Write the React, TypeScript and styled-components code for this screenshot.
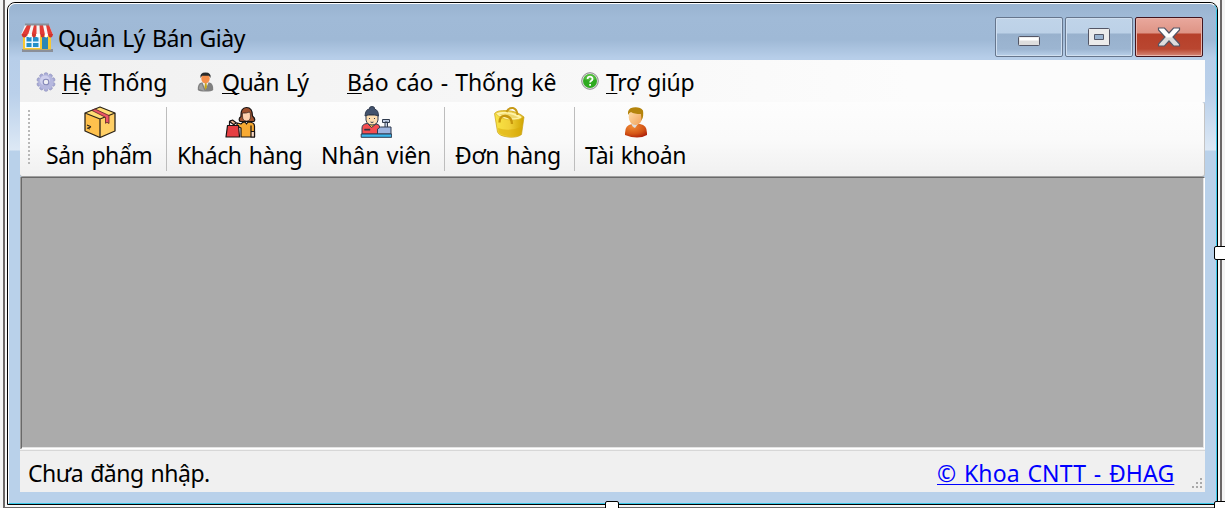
import React from "react";
import styled, { createGlobalStyle } from "styled-components";

const Global = createGlobalStyle`
  * { box-sizing: border-box; }
  body { margin: 0; background: #f5f5f5; overflow: hidden; }
`;

const Designer = styled.div`
  position: relative;
  width: 1225px;
  height: 508px;
  overflow: hidden;
  padding: 0 3px;
  background: #f4f4f4;
  font-family: "Noto Sans", "Open Sans", sans-serif;
  font-size: 23px;
  color: #000;
`;

const Frame = styled.div`
  width: 1219px;
  height: 508px;
  padding: 2px;
  border: solid #6b6767;
  border-width: 0 2px 1px 2px;
  background: #f7f7f7;
`;

const Win = styled.div`
  width: 1211px;
  height: 503px;
  border: 1px solid #000;
  border-radius: 8px 8px 0 0;
  overflow: hidden;
  display: flex;
`;

const Glass = styled.div`
  flex: 1;
  border: 1px solid;
  border-color: #fff #38c8e8 #38c8e8 #fff;
  border-radius: 7px 7px 0 0;
  padding: 0 11px 11px;
  display: flex;
  flex-direction: column;
  background: linear-gradient(
    #99b4d1 0, #a0bad7 14px, #9fb9d6 36px, #b7cee9 54px, #bad0ea 90px,
    #dce8f5 145px, #dce8f5 146px, #b9d1ea 147px, #b9d1ea 100%);
`;

const TitleBar = styled.header`
  height: 56px;
  display: flex;
  align-items: flex-start;
  padding: 13px 2px 0 1px;
`;

const Title = styled.div`
  flex: 1;
  display: flex;
  padding-top: 6px;
  gap: 5px;
`;

const Controls = styled.div`
  display: flex;
  gap: 2px;
`;

const Control = styled.button<{ $close?: boolean }>`
  width: 68px;
  height: 40px;
  padding: 0;
  display: flex;
  align-items: center;
  justify-content: center;
  border: 1px solid ${p => (p.$close ? "#43141d" : "#66768d")};
  border-radius: 2px;
  box-shadow: inset 0 0 0 1px ${p => (p.$close ? "#e8b5ac" : "#d0dff0")};
  background: ${p =>
    p.$close
      ? "linear-gradient(#e9a89d 0, #de9485 15px, #b6402a 16px, #b94630 31px, #d58879 100%)"
      : "linear-gradient(#c0d4e9 0, #bcd1e7 15px, #98b1cd 16px, #9cb5d1 31px, #b9d0ea 100%)"};
`;

const Label = styled.span<{ $w: number; $ls: number }>`
  display: block;
  width: ${p => p.$w}px;
  flex: none;
  line-height: 30px;
  white-space: nowrap;
  letter-spacing: ${p => p.$ls}px;
  word-spacing: 1.5px;
`;

const Key = styled.span`
  text-decoration: underline;
  text-decoration-thickness: 1px;
  text-underline-offset: 2px;
  text-decoration-skip-ink: none;
`;

const MenuBar = styled.nav`
  height: 42px;
  display: flex;
  padding: 7px 0 0 16px;
  background: linear-gradient(90deg, #f0f0f0, #fcfcfc 75%);
`;

const MenuItem = styled.div<{ $ml?: number; $gap?: number }>`
  display: flex;
  gap: ${p => p.$gap ?? 6}px;
  margin-left: ${p => p.$ml ?? 0}px;
  svg { margin-top: 5px; }
`;

const ToolStrip = styled.div`
  height: 75px;
  display: flex;
  padding: 4px 0 0 8px;
  border-bottom: 1px solid #a0a0a0;
  border-right: 1px solid #c4c4c4;
  border-radius: 0 3px 3px 3px;
  background: linear-gradient(#fdfdfd, #fafafa 50%, #f0f0f0);
`;

const Grip = styled.div`
  width: 2px;
  height: 55px;
  margin: 4px 0 0;
  background: repeating-linear-gradient(#b8b8b8 0 2px, transparent 2px 4px);
`;

const Tool = styled.div<{ $ml: number }>`
  display: flex;
  flex-direction: column;
  align-items: center;
  margin-left: ${p => p.$ml}px;
  svg { display: block; margin-bottom: 2px; }
`;

const Divider = styled.div<{ $ml: number }>`
  width: 1px;
  height: 64px;
  margin: 1px 0 0 ${p => p.$ml}px;
  background: #bdbdbd;
`;

const Workspace = styled.main`
  height: 272px;
  margin-left: 1px;
  background: #ababab;
  border: 1px solid;
  border-color: #696969 #fff #fff #696969;
  box-shadow: inset -1px -1px #e3e3e3, -1px 0 #a0a0a0;
`;

const StatusBar = styled.footer`
  height: 43px;
  padding: 9px 1px 0 8px;
  display: flex;
  justify-content: space-between;
  background: linear-gradient(#f4f4f4 0 1px, #d7d7d7 1px 2px, #f0f0f0 2px);
`;

const Right = styled.div`
  display: flex;
  gap: 18px;
  svg { margin-top: 20px; }
`;

const Link = styled(Label)`
  color: #0000ff;
  text-decoration: underline;
  text-decoration-thickness: 1px;
  text-underline-offset: 2px;
`;

const Handle = styled.i<{ $x: number; $y: number }>`
  position: absolute;
  left: ${p => p.$x}px;
  top: ${p => p.$y}px;
  width: 14px;
  height: 14px;
  background: #fff;
  border: 1px solid #000;
  border-radius: 2px;
`;

const ShopIcon = () => (
  <svg width="32" height="30" viewBox="0 0 32 30">
    <rect x="1" y="26" width="31" height="3" fill="#8b8f98" />
    <rect x="2" y="10" width="28" height="16.500" fill="#f8c832" />
    <rect x="4" y="13" width="15" height="12" fill="#e8f6ff" />
    <path d="M5.500 14h5v4.500h-5zM12 14h5.500v4.500H12zM5.500 20h5v4h-5zM12 20h5.500v4H12z" fill="#238fc9" />
    <rect x="21" y="14" width="6" height="12" fill="#2c86b5" />
    <path d="M4 2h24l4 10H0z" fill="#f5f5f5" />
    <path d="M6 2h4L7 12H.5zM13 2h2.500v10H10.500zM18.500 2H22l2 10h-5zM25 2h3l4 10h-5z" fill="#e23c35" />
    <path d="M6.500 11H11q0 3.500-2.300 3.500T6.500 11M15 11h4.500q0 3.500-2.200 3.500T15 11M23.500 11H27q0 3.500-1.800 3.500T23.500 11" fill="#fff" />
    <path d="M.5 11h6q-1 3.500-3.200 3.500T.5 11M11 11h4q0 3.500-2 3.500T11 11M19.500 11h4q0 3.500-2 3.500t-2-3.500M27 11h5q-.5 3.500-2.500 3.500T27 11" fill="#cf342e" />
    <path d="M4 1.500h24" stroke="#8a909a" strokeWidth="2" />
  </svg>
);

const GearIcon = () => (
  <svg width="20" height="20" viewBox="0 0 20 20">
    <g fill="#a9abd6" stroke="#8588b8" strokeWidth=".5">
      {[0, 36, 72, 108, 144].map(a => (
        <rect key={a} x="8.300" y=".8" width="3.400" height="18.400" rx="1" transform={`rotate(${a} 10 10)`} />
      ))}
    </g>
    <circle cx="10" cy="10" r="7.500" fill="#b5b7de" />
    <circle cx="9" cy="8.500" r="5" fill="#cfd0ed" />
    <circle cx="10" cy="10" r="2.800" fill="#f0f0f5" stroke="#8588b8" strokeWidth="1.100" />
  </svg>
);

const ManagerIcon = () => (
  <svg width="17" height="20" viewBox="0 0 17 20">
    <path d="M.8 18q-.5-6.500 3.700-7.500h8q4.200 1 3.700 7.500-1.500 1.500-7.700 1.500T.8 18" fill="#808080" />
    <path d="M2 17q0-4 2.500-5.500l3 7.500z" fill="#a0a0a0" />
    <path d="M5.500 10.500h6l-3 7z" fill="#eee" />
    <path d="M8 11h1.500l.5 4-1.500 3-1-3z" fill="#c4a519" />
    <ellipse cx="8.500" cy="6.500" rx="4.200" ry="5" fill="#f58f4b" />
    <path d="M3.500 6Q2.500.5 8.500.5T13.500 6L12 3.800H5z" fill="#292b2c" />
  </svg>
);

const HelpIcon = () => (
  <svg width="18" height="18" viewBox="0 0 18 18">
    <circle cx="9" cy="9" r="8.300" fill="#e3e3e3" stroke="#8a8a8a" />
    <circle cx="9" cy="9" r="7" fill="#2eaa20" />
    <path d="M3 7q1-5 6-5t6 5q-6 3-12 0" fill="#6acb50" opacity=".55" />
    <path d="M6.600 7q0-2.300 2.500-2.300T11.500 7q0 1-1.200 1.700T9.100 10.500M9.100 12v1.800" fill="none" stroke="#fff" strokeWidth="1.800" />
  </svg>
);

const BoxIcon = () => (
  <svg width="32" height="32" viewBox="0 0 32 32" strokeLinejoin="round">
    <path d="M16 1 31 7v18l-15 6.500L1 25V7z" fill="#ffc14d" />
    <path d="M16 1 31 7l-15 6L1 7z" fill="#ffdc73" />
    <path d="M16 13 31 7v18l-15 6.500z" fill="#ffcf66" />
    <path d="M16 1 31 7v18l-15 6.500L1 25V7zM1 7l15 6 15-6M16 13v18" fill="none" stroke="#2c251b" strokeWidth="1.300" />
    <path d="m8 4.500 3-1.500 14 6.500v8l-2-1.200-1.500 1v-6z" fill="#ed5565" stroke="#542127" strokeWidth=".8" />
    <path d="m3 19 4 1.800M3 22l3 1M7 21l-3 1" fill="none" stroke="#2c251b" strokeWidth="1.100" />
  </svg>
);

const CustomerIcon = () => (
  <svg width="32" height="32" viewBox="-1.500 0 32 32" strokeLinejoin="round" stroke="#171313" strokeWidth="1.200">
    <path d="M14.500 15.500q-2-3 1-5Q15 1.500 21 1.500T27 10q3.500 3 1.500 5.500z" fill="#a0522f" />
    <path d="M17 7q4 .5 7-1 1 1 1 4 0 5-4 5t-4-5z" fill="#ffd2b0" strokeWidth=".6" />
    <path d="M15.500 18q1-2 4-2l1.500 2 1.500-2q6.500 0 6.500 4v11H15.500v-9L11 20l1-3z" fill="#f8aa32" />
    <path d="M25.500 19.500v6M25.500 25.500H29V31h-3.500z" fill="#fbd8c0" />
    <path d="M4 20v-4.500q4-3 5 4.500" fill="none" />
    <path d="M2 19.500h11L14 31H.5z" fill="#e63f43" />
    <path d="m4 15.500 3-1.500 4 3-3 1.500z" fill="#f0b590" />
  </svg>
);

const CashierIcon = () => (
  <svg width="32" height="32" viewBox="-.5 0 32 32" strokeLinejoin="round" stroke="#303b4e" strokeWidth="1">
    <path d="M1.500 28v-6q0-4 5-4.500h8q4.500.5 5 4V28z" fill="#f54d50" />
    <path d="m7 17.500 4 4 5-4-1-1H8z" fill="#ffc83d" />
    <path d="M5.500 9h12v5q-1 5-6 5t-6-5z" fill="#ffdeb0" />
    <path d="M4.500 10Q5 3 9 3q-.5-2.500 2.500-2.500T14 3q4 1 4 7L14 8.500H8z" fill="#43536e" />
    <path d="M9 12v1m5-1v1m-4 3q1.500 1 3 0" fill="none" />
    <path d="M4 23h5.500v1.300H4z" fill="#30343d" strokeWidth=".5" />
    <path d="M24.500 16h2.500v6h-2.500zM22 13.500h7v3h-7z" fill="#c2cfe5" />
    <path d="m17 23 3-2h10.500v7H17z" fill="#9db4df" />
    <path d="M.7 28h30.500v3.300H.7z" fill="#39b7ed" />
  </svg>
);

const BasketIcon = () => (
  <svg width="32" height="32" viewBox="0 0 32 32">
    <defs>
      <linearGradient id="basket"><stop stopColor="#f9e545" /><stop offset=".5" stopColor="#f2d23a" /><stop offset="1" stopColor="#d0a400" /></linearGradient>
    </defs>
    <path d="M1.500 7.500Q4 4 14 4.500T31 11l-2.500 17.500Q24 32 15 31T4.500 26z" fill="url(#basket)" stroke="#c9a11a" strokeWidth=".7" />
    <path d="M2.500 7.500Q5 5 14 5.500T29.500 11q-3 3.500-12 3t-15-6.500" fill="#fff3a6" stroke="#e0bd30" strokeWidth=".8" />
    <path d="M6 8.500q9-3 20 3-8 2.500-20-3" fill="#eed86e" />
    <path d="M5 22q10 4 23.500-1L27.500 28q-5 3-12.500 2T5.500 26z" fill="#d9aa09" opacity=".55" />
    <path d="M13.500 6q2-4.500 6.500-4 4 1 4.500 7" fill="none" stroke="#c79a17" strokeWidth="2" />
    <path d="M6.500 16.500q0-7 6-6.500 6 .5 6.500 8" fill="none" stroke="#c7960c" strokeWidth="2.300" />
  </svg>
);

const UserIcon = () => (
  <svg width="24" height="32" viewBox="0 0 24 32">
    <defs>
      <radialGradient id="shirt" cx=".35" cy=".2" r=".9"><stop stopColor="#f08a35" /><stop offset=".6" stopColor="#d45516" /><stop offset="1" stopColor="#a91a09" /></radialGradient>
      <linearGradient id="face" x2="1" y2="1"><stop stopColor="#ffe0ad" /><stop offset="1" stopColor="#f1a057" /></linearGradient>
    </defs>
    <path d="M1 27q0-8 7-9h8q7 1 7 9v2q-9 5-22 0z" fill="url(#shirt)" />
    <path d="m7 17 7 1-3 4q-3-1-4-5" fill="#ddd" />
    <ellipse cx="11.500" cy="11" rx="6.800" ry="8" fill="url(#face)" />
    <path d="M4 9Q3 2.500 9 1.500q7-1 10 3 1 6-1.500 10L17 8q-7 0-10-2Q5 7 4 9" fill="#b4840c" />
  </svg>
);

const MinIcon = () => (
  <svg width="22" height="40" viewBox="0 0 22 40">
    <rect x=".5" y="19.500" width="21" height="9" rx="1" fill="#ddd" stroke="#535666" />
    <path d="M1.500 20.500h19v3h-19z" fill="#fff" />
  </svg>
);

const MaxIcon = () => (
  <svg width="22" height="18" viewBox="0 0 22 18">
    <path d="M1.500.5h19q1 0 1 1v15q0 1-1 1h-19q-1 0-1-1v-15q0-1 1-1M6.500 6.500v5h9v-5z" fill="#ebebeb" fillRule="evenodd" stroke="#535666" />
  </svg>
);

const CloseIcon = () => (
  <svg width="24" height="20" viewBox="0 0 24 20">
    <defs><linearGradient id="cross" x2="0" y2="1"><stop offset=".5" stopColor="#fff" /><stop offset=".55" stopColor="#ddd" /></linearGradient></defs>
    <path d="M1.500 1h6L12 6l4.500-5h6v2L16 10l6.500 7v2h-6L12 14l-4.500 5h-6v-2L8 10 1.500 3z" fill="url(#cross)" stroke="#535666" strokeWidth="1.200" />
  </svg>
);

const ResizeGrip = () => (
  <svg width="12" height="12" viewBox="0 0 12 12" fill="#a9a9a9">
    <path d="M8 0h2v2H8zM4 4h2v2H4zM8 4h2v2H8zM0 8h2v2H0zM4 8h2v2H4zM8 8h2v2H8z" />
  </svg>
);

export default function App() {
  return (
    <Designer>
      <Global />
      <Frame>
        <Win>
          <Glass>
            <TitleBar>
              <Title><ShopIcon /><Label $w={190} $ls={-0.5}>Quản Lý Bán Giày</Label></Title>
              <Controls>
                <Control aria-label="Minimize"><MinIcon /></Control>
                <Control aria-label="Maximize"><MaxIcon /></Control>
                <Control aria-label="Close" $close><CloseIcon /></Control>
              </Controls>
            </TitleBar>
            <MenuBar>
              <MenuItem><GearIcon /><Label $w={106} $ls={-0.2}><Key>H</Key>ệ Thống</Label></MenuItem>
              <MenuItem $ml={29} $gap={8}><ManagerIcon /><Label $w={88} $ls={-0.6}><Key>Q</Key>uản Lý</Label></MenuItem>
              <MenuItem $ml={37}><Label $w={210} $ls={-0.12}><Key>B</Key>áo cáo - Thống kê</Label></MenuItem>
              <MenuItem $ml={24} $gap={7}><HelpIcon /><Label $w={90} $ls={-0.3}><Key>T</Key>rợ giúp</Label></MenuItem>
            </MenuBar>
            <ToolStrip>
              <Grip />
              <Tool $ml={16}><BoxIcon /><Label $w={108} $ls={-0.45}>Sản phẩm</Label></Tool>
              <Divider $ml={12} />
              <Tool $ml={10}><CustomerIcon /><Label $w={126} $ls={-0.4}>Khách hàng</Label></Tool>
              <Tool $ml={18}><CashierIcon /><Label $w={110} $ls={-0.1}>Nhân viên</Label></Tool>
              <Divider $ml={13} />
              <Tool $ml={10}><BasketIcon /><Label $w={108} $ls={-0.3}>Đơn hàng</Label></Tool>
              <Divider $ml={11} />
              <Tool $ml={10}><UserIcon /><Label $w={102} $ls={-0.45}>Tài khoản</Label></Tool>
            </ToolStrip>
            <Workspace />
            <StatusBar>
              <Label $w={184} $ls={-0.5}>Chưa đăng nhập.</Label>
              <Right><Link $w={237} $ls={0.15}>© Khoa CNTT - ĐHAG</Link><ResizeGrip /></Right>
            </StatusBar>
          </Glass>
        </Win>
      </Frame>
      <Handle $x={1214} $y={246} />
      <Handle $x={605} $y={501} />
      <Handle $x={1214} $y={501} />
    </Designer>
  );
}
